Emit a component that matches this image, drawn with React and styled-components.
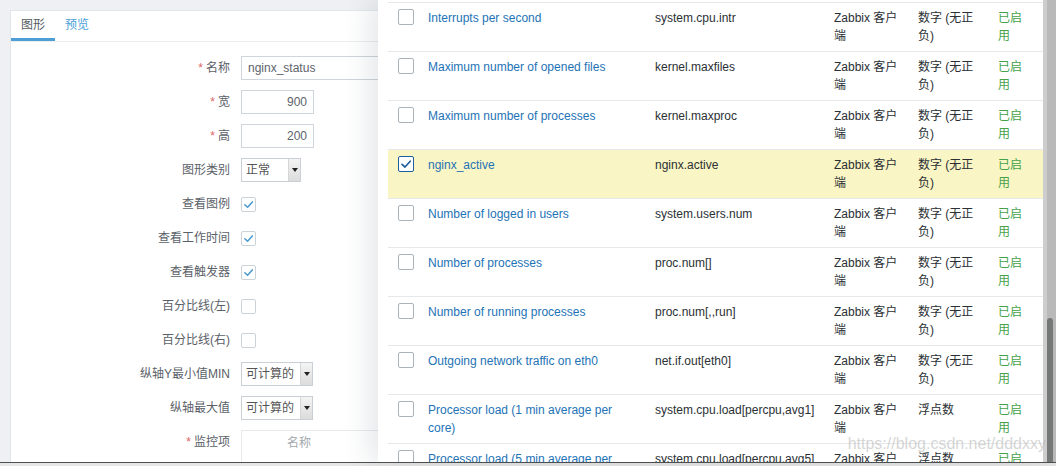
import React from 'react';
import styled, { createGlobalStyle } from 'styled-components';

const GlobalStyle = createGlobalStyle`
  html, body {
    margin: 0;
    padding: 0;
    background: #eef0f3;
    font-family: "Liberation Sans", "Noto Sans CJK SC", Arial, sans-serif;
    font-size: 12px;
  }
  * { box-sizing: border-box; }
`;

const Page = styled.div`
  position: relative;
  width: 1056px;
  height: 466px;
  display: flex;
  flex-direction: column;
  overflow: hidden;
  background: #eef0f3;
`;

const Main = styled.div`
  flex: 1;
  min-height: 0;
  padding: 10px 0 0 10px;
  overflow: hidden;
`;

const Card = styled.div`
  height: 100%;
  background: #ffffff;
  border: 1px solid #e3e6e9;
  border-bottom: none;
  border-right: none;
`;

const TabBar = styled.div`
  display: flex;
  height: 31px;
  border-bottom: 1px solid #ebeef0;
`;

const Tab = styled.div`
  height: 30px;
  padding: 0 10px;
  line-height: 28px;
  font-size: 12px;
  color: ${({ $active }) => ($active ? '#555b61' : '#4a9fd8')};
  border-bottom: 3px solid ${({ $active }) => ($active ? '#4f9ed6' : 'transparent')};
`;

const Form = styled.div`
  display: grid;
  grid-template-columns: 219px 1fr;
  grid-auto-rows: minmax(24px, auto);
  column-gap: 11px;
  row-gap: 10px;
  align-items: center;
  padding-top: 14px;
`;

const Label = styled.div`
  text-align: right;
  color: #5b6168;
  font-size: 12px;
  line-height: 24px;
  align-self: ${({ $top }) => ($top ? 'start' : 'center')};
  padding-top: ${({ $top }) => ($top ? '0px' : '0')};
`;

const Star = styled.span`
  color: #e06565;
  margin-right: 3px;
`;

const TextInput = styled.input`
  display: block;
  width: ${({ $w }) => $w}px;
  height: 24px;
  padding: 0 6px;
  border: 1px solid #cfd5da;
  border-radius: 0;
  font-family: inherit;
  font-size: 12px;
  color: #5d636a;
  background: #fff;
  text-align: ${({ $right }) => ($right ? 'right' : 'left')};
  outline: none;
`;

const Select = styled.div`
  display: flex;
  width: ${({ $w }) => $w}px;
  height: 24px;
  border: 1px solid #c9cfd4;
  background: #fff;
`;

const SelectText = styled.span`
  flex: 1;
  padding-left: 4px;
  line-height: 22px;
  font-size: 12px;
  color: #555;
`;

const SelectArrow = styled.span`
  width: 12px;
  display: flex;
  align-items: center;
  justify-content: center;
  background: linear-gradient(#f4f4f4, #dcdcdc);
  border-left: 1px solid #d6d6d6;
  &::after {
    content: '';
    border-left: 3px solid transparent;
    border-right: 3px solid transparent;
    border-top: 4px solid #222;
  }
`;

const FormCheck = styled.span`
  display: flex;
  align-items: center;
  justify-content: center;
  width: 15px;
  height: 15px;
  border: 1px solid #cbd2d8;
  border-radius: 2px;
  background: #fff;
`;

const ItemsBox = styled.div`
  width: 300px;
  height: 60px;
  border: 1px solid #e7eaed;
  border-right: none;
`;

const ItemsHead = styled.div`
  width: 114px;
  height: 24px;
  line-height: 24px;
  text-align: center;
  color: #a3a8ad;
  font-size: 12px;
`;

const AddLink = styled.div`
  padding: 4px 0 0 6px;
  color: #2a8ad0;
  font-size: 12px;
`;

const Modal = styled.div`
  position: absolute;
  top: 0;
  left: 378px;
  right: 0;
  bottom: 4px;
  display: flex;
  background: #ffffff;
  box-shadow: -8px 0 26px rgba(60, 75, 90, 0.14);
`;

const ModalBody = styled.div`
  flex: 1;
  padding: 2px 0 0 10px;
  overflow: hidden;
`;

const Row = styled.div`
  display: grid;
  grid-template-columns: 40px 227px 179px 84px 80px 45px;
  height: 49px;
  border-top: 1px solid #e6e9ec;
  background: ${({ $hl }) => ($hl ? '#faf5c4' : '#ffffff')};
`;

const Cell = styled.div`
  padding: 6px ${({ $pr }) => $pr || 0}px 0 ${({ $pl }) => $pl || 0}px;
  line-height: 18px;
  font-size: 12px;
  color: ${({ $tone }) =>
    $tone === 'link' ? '#1d73b6' : $tone === 'ok' ? '#45a24a' : '#2a3034'};
`;

const RowCheck = styled.span`
  display: flex;
  align-items: center;
  justify-content: center;
  width: 16px;
  height: 16px;
  border: 1px solid ${({ $on }) => ($on ? '#1e5f9f' : '#a9b3bc')};
  border-radius: 2px;
  background: #fff;
`;

const Track = styled.div`
  width: 13px;
  display: flex;
  flex-direction: column;
  padding-top: 318px;
  background: linear-gradient(90deg, #cdcdcd 0, #cdcdcd 4px, #b9b9b9 4px);
`;

const Thumb = styled.div`
  flex: 1;
  width: 6px;
  margin-left: 4px;
  border-radius: 3px 3px 0 0;
  background: #767878;
`;

const Watermark = styled.div`
  position: absolute;
  right: 10px;
  bottom: 9px;
  font-size: 16px;
  color: rgba(185, 185, 185, 0.6);
  pointer-events: none;
`;

const BottomStrip = styled.div`
  height: 4px;
  border-top: 1px solid #4f4f4f;
  background: #e6e6e6;
`;

const Tick = ({ color, size = 11 }) => (
  <svg width={size} height={size} viewBox="0 0 12 12">
    <path d="M2 6.3 L5 9 L10.2 3.2" fill="none" stroke={color} strokeWidth="1.7" strokeLinecap="round" strokeLinejoin="round" />
  </svg>
);

const AGENT = 'Zabbix 客户端';
const UINT = '数字 (无正负)';

const items = [
  ['Interrupts per second', 'system.cpu.intr', UINT],
  ['Maximum number of opened files', 'kernel.maxfiles', UINT],
  ['Maximum number of processes', 'kernel.maxproc', UINT],
  ['nginx_active', 'nginx.active', UINT, true],
  ['Number of logged in users', 'system.users.num', UINT],
  ['Number of processes', 'proc.num[]', UINT],
  ['Number of running processes', 'proc.num[,,run]', UINT],
  ['Outgoing network traffic on eth0', 'net.if.out[eth0]', UINT],
  ['Processor load (1 min average per core)', 'system.cpu.load[percpu,avg1]', '浮点数'],
  ['Processor load (5 min average per core)', 'system.cpu.load[percpu,avg5]', '浮点数'],
];

const checks = [
  ['查看图例', true],
  ['查看工作时间', true],
  ['查看触发器', true],
  ['百分比线(左)', false],
  ['百分比线(右)', false],
];

export default function App() {
  return (
    <>
      <GlobalStyle />
      <Page>
        <Main>
          <Card>
            <TabBar>
              <Tab $active>图形</Tab>
              <Tab>预览</Tab>
            </TabBar>
            <Form>
              <Label><Star>*</Star>名称</Label>
              <TextInput $w={240} value="nginx_status" readOnly />
              <Label><Star>*</Star>宽</Label>
              <TextInput $w={73} $right value="900" readOnly />
              <Label><Star>*</Star>高</Label>
              <TextInput $w={73} $right value="200" readOnly />
              <Label>图形类别</Label>
              <Select $w={60}>
                <SelectText>正常</SelectText>
                <SelectArrow />
              </Select>
              {checks.map(([label, on]) => (
                <React.Fragment key={label}>
                  <Label>{label}</Label>
                  <FormCheck>{on && <Tick color="#4b9bd0" />}</FormCheck>
                </React.Fragment>
              ))}
              <Label>纵轴Y最小值MIN</Label>
              <Select $w={72}>
                <SelectText>可计算的</SelectText>
                <SelectArrow />
              </Select>
              <Label>纵轴最大值</Label>
              <Select $w={72}>
                <SelectText>可计算的</SelectText>
                <SelectArrow />
              </Select>
              <Label $top><Star>*</Star>监控项</Label>
              <ItemsBox>
                <ItemsHead>名称</ItemsHead>
                <AddLink>添加</AddLink>
              </ItemsBox>
            </Form>
          </Card>
        </Main>
        <BottomStrip />

        <Modal>
          <ModalBody>
            {items.map(([name, key, vtype, on]) => (
              <Row key={key} $hl={on}>
                <Cell $pl={10}>
                  <RowCheck $on={on}>{on && <Tick color="#1e5f9f" size={12} />}</RowCheck>
                </Cell>
                <Cell $tone="link" $pr={20}>{name}</Cell>
                <Cell $pr={8}>{key}</Cell>
                <Cell $pr={12}>{AGENT}</Cell>
                <Cell $pr={14}>{vtype}</Cell>
                <Cell $tone="ok" $pr={12}>已启用</Cell>
              </Row>
            ))}
          </ModalBody>
          <Track>
            <Thumb />
          </Track>
          <Watermark>https://blog.csdn.net/dddxxy</Watermark>
        </Modal>
      </Page>
    </>
  );
}
